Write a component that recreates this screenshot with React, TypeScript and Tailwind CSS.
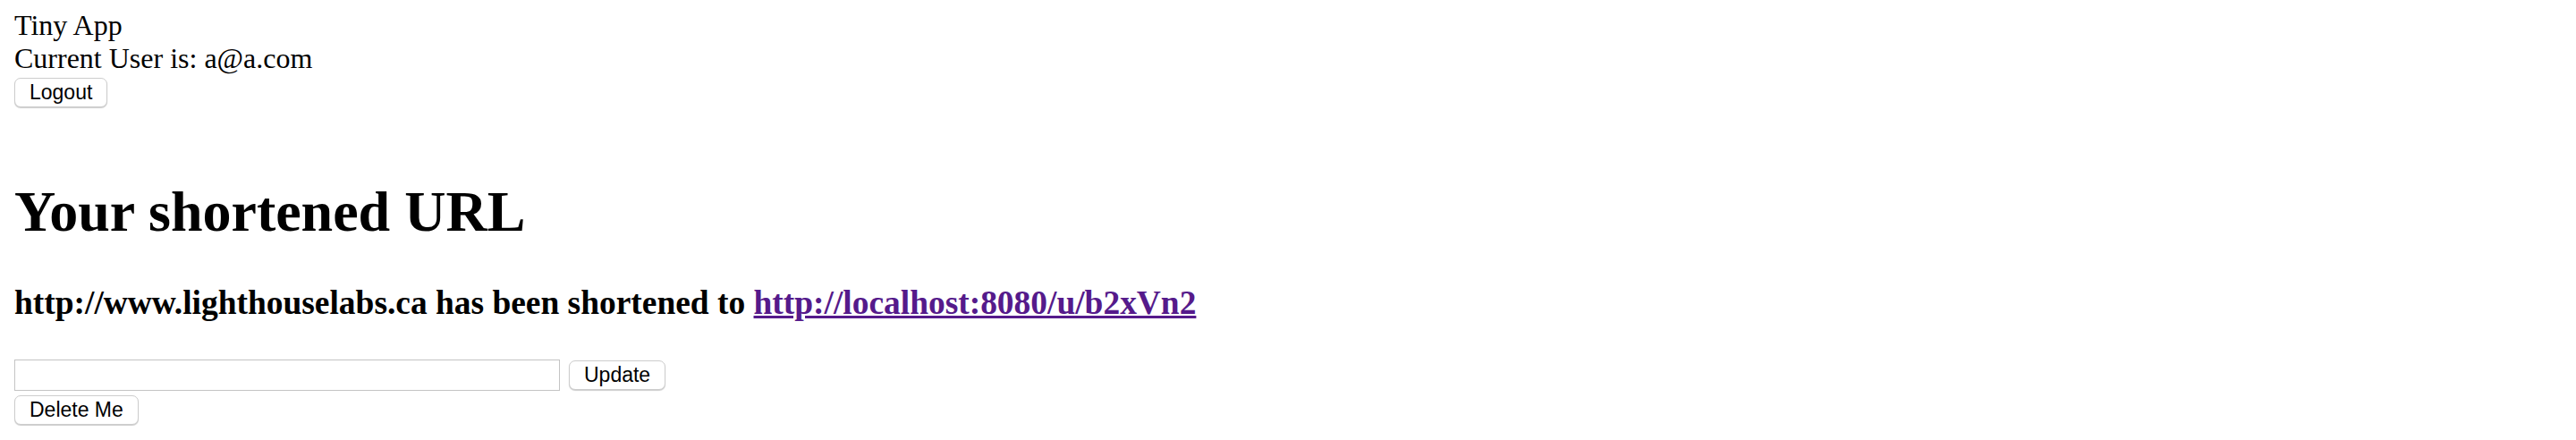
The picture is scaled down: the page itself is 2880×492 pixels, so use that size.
import { useState } from 'react';

const btn =
  'h-[33px] px-[16px] bg-white border border-[#cdcdcd] rounded-[7px] shadow-[0_1px_1px_rgba(0,0,0,0.2)] text-[23px] leading-none text-black font-["Liberation_Sans",Arial,sans-serif]';

function Header() {
  return (
    <div className="flex flex-col items-start">
      <div className="text-[32px] leading-[37px]">Tiny App</div>
      <div className="text-[32px] leading-[37px]">Current User is: a@a.com</div>
      <form className="mt-[3px]" onSubmit={(e) => e.preventDefault()}>
        <button type="submit" className={btn}>Logout</button>
      </form>
    </div>
  );
}

export default function App() {
  const [url, setUrl] = useState('');

  return (
    <div className='w-full h-[492px] bg-white text-black px-[16px] pt-[10px] font-["Liberation_Serif","Times_New_Roman",serif] overflow-hidden'>
      <Header />

      <h1 className="mt-[80px] text-[64px] leading-[73.5px] font-bold">Your shortened URL</h1>

      <h3 className="mt-[43px] text-[37.44px] leading-[43px] font-bold">
        http://www.lighthouselabs.ca has been shortened to{' '}
        <a href="#" className="text-[#551a8b] underline">http://localhost:8080/u/b2xVn2</a>
      </h3>

      <form className="mt-[42px] flex items-center" onSubmit={(e) => e.preventDefault()}>
        <input
          type="text"
          value={url}
          onChange={(e) => setUrl(e.target.value)}
          className="w-[610px] h-[35px] border border-[#c4c4c4] bg-white outline-none px-1 text-[23px]"
        />
        <button type="submit" className={`${btn} ml-[10px]`}>Update</button>
      </form>
      <form className="mt-[5px]" onSubmit={(e) => e.preventDefault()}>
        <button type="submit" className={btn}>Delete Me</button>
      </form>
    </div>
  );
}
